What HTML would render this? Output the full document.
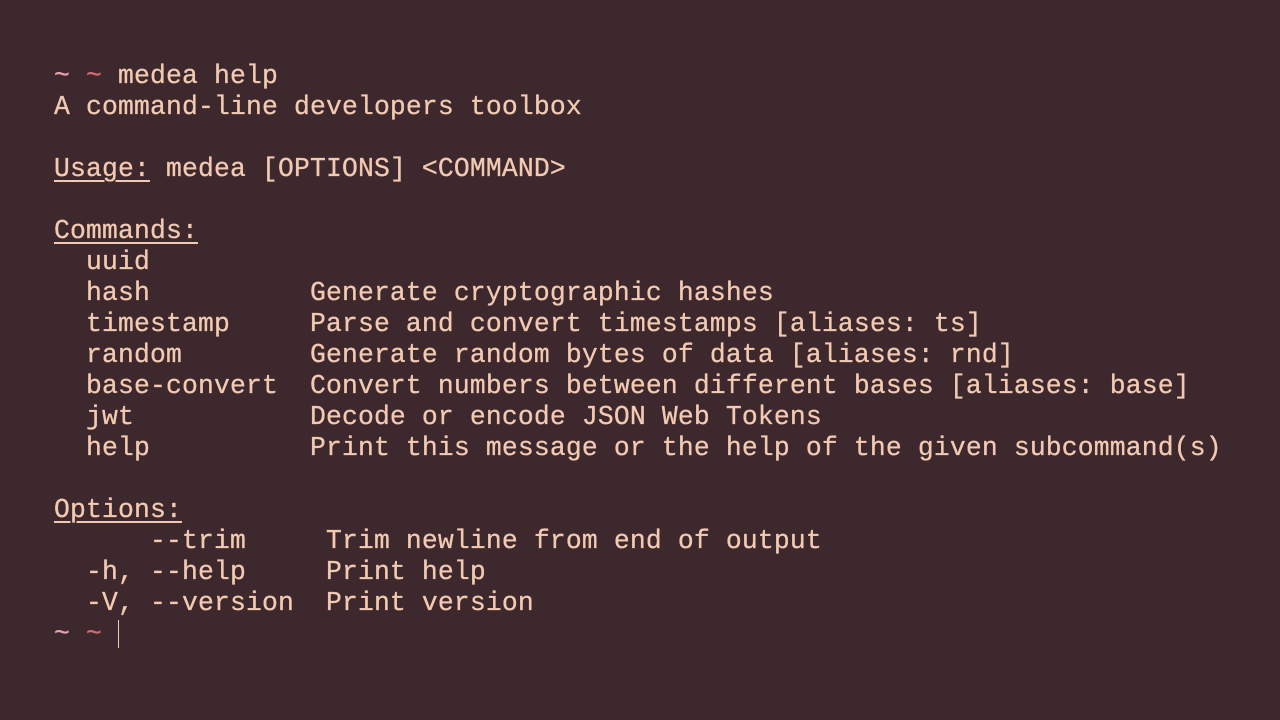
<!DOCTYPE html>
<html><head><style>
html,body{margin:0;padding:0;background:#3d282e;width:1280px;height:720px;overflow:hidden}
pre{position:absolute;left:54px;top:61px;margin:0;font-family:"Liberation Mono",monospace;font-size:26.4px;letter-spacing:0.16px;line-height:31px;color:#f2c9b1;-webkit-text-stroke:0.3px #f2c9b1}
u{text-decoration-thickness:2px;text-underline-offset:4px}
.a{color:#e8a4ac;-webkit-text-stroke-color:#e8a4ac}.b{color:#d46a72;-webkit-text-stroke-color:#d46a72}
.c{display:inline-block;width:1px;height:28px;background:#f2c9b1;vertical-align:-7px}
</style></head><body>
<pre><span class="a">~</span> <span class="b">~</span> medea help
A command-line developers toolbox

<u>Usage:</u> medea [OPTIONS] &lt;COMMAND&gt;

<u>Commands:</u>
  uuid
  hash          Generate cryptographic hashes
  timestamp     Parse and convert timestamps [aliases: ts]
  random        Generate random bytes of data [aliases: rnd]
  base-convert  Convert numbers between different bases [aliases: base]
  jwt           Decode or encode JSON Web Tokens
  help          Print this message or the help of the given subcommand(s)

<u>Options:</u>
      --trim     Trim newline from end of output
  -h, --help     Print help
  -V, --version  Print version
<span class="a">~</span> <span class="b">~</span> <span class="c"></span></pre>
</body></html>
